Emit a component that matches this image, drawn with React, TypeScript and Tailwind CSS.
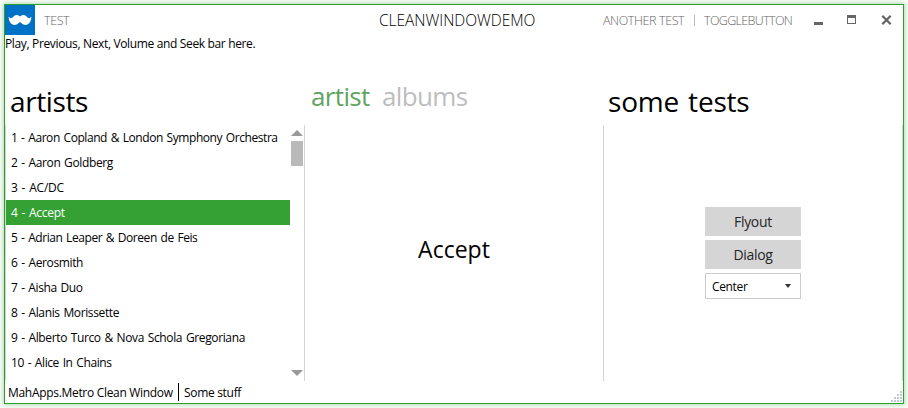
const artists = [
  { name: "1 - Aaron Copland & London Symphony Orchestra", tracking: "tracking-[-0.43px]" },
  { name: "2 - Aaron Goldberg", tracking: "tracking-[-0.37px]" },
  { name: "3 - AC/DC", tracking: "tracking-[-0.2px]" },
  { name: "4 - Accept", tracking: "tracking-[-0.25px]" },
  { name: "5 - Adrian Leaper & Doreen de Feis", tracking: "tracking-[-0.44px]" },
  { name: "6 - Aerosmith", tracking: "tracking-[-0.37px]" },
  { name: "7 - Aisha Duo", tracking: "tracking-[-0.4px]" },
  { name: "8 - Alanis Morissette", tracking: "tracking-[-0.37px]" },
  { name: "9 - Alberto Turco & Nova Schola Gregoriana", tracking: "tracking-[-0.37px]" },
  { name: "10 - Alice In Chains", tracking: "tracking-[-0.4px]" },
];

function TitleBar() {
  return (
    <header className="flex h-[30px] shrink-0 items-center">
      <div className="flex h-[30px] w-[30px] items-center justify-center bg-[#0072c6]">
        <svg width="24" height="12" viewBox="0 0 24 12" fill="#fff">
          <path d="M0.6 2.8L2.6 4.3C4 4.2 5 3.2 6 2C7.4 0.6 9.8 0.6 11 1.8L12 2.6L13 1.8C14.2 0.6 16.6 0.6 18 2C19 3.2 20 4.2 21.4 4.3L23.4 2.8C23.2 6.6 21.8 9.6 19.4 10.6C17.2 11.4 15 10.6 13.6 9.2L12 8L10.4 9.2C9 10.6 6.8 11.4 4.6 10.6C2.2 9.6 0.8 6.6 0.6 2.8Z" />
        </svg>
      </div>
      <span className="ml-[9px] w-[335px] pt-0.5 text-[12.5px] font-light tracking-[-0.4px] text-[#666]">TEST</span>
      <span className="w-[224px] pt-0.5 text-[15.5px] font-light tracking-[-0.03px] text-black">CLEANWINDOWDEMO</span>
      <span className="w-[91px] pt-0.5 text-[12.5px] font-light tracking-[-0.4px] text-[#666]">ANOTHER TEST</span>
      <span className="mt-px h-[11px] w-px bg-[#b8b8b8]" />
      <span className="ml-[9px] w-[110px] pt-0.5 text-[12.5px] font-light tracking-[-0.65px] text-[#666]">TOGGLEBUTTON</span>
      <svg width="78" height="12" viewBox="0 0 78 12" shapeRendering="crispEdges">
        <path d="M0 8h9v3H0z" fill="#666" />
        <path d="M33 1h9v9h-9zM34 4v5h7V4z" fill="#666" fillRule="evenodd" />
        <path d="M68.3 1.8L76.7 10.2M76.7 1.8L68.3 10.2" stroke="#666" strokeWidth="2.3" shapeRendering="auto" />
      </svg>
    </header>
  );
}

function ArtistList() {
  return (
    <div className="flex h-[256px] border-x border-[#d4d4d4]">
      <ul className="w-[284px] text-[12px] [word-spacing:1px]">
        {artists.map((artist, i) => (
          <li
            key={artist.name}
            className={`flex h-[25px] items-center whitespace-nowrap pt-px pl-[5px] ${artist.tracking} ${
              i === 3 ? "bg-[#35a135] text-white" : "text-black"
            }`}
          >
            {artist.name}
          </li>
        ))}
      </ul>
      <div className="flex w-[14px] flex-col items-center pt-[5px] pb-[5px]">
        <svg width="12" height="6" viewBox="0 0 12 6" fill="#999"><path d="M6 0L12 6H0z" /></svg>
        <div className="mt-[5px] h-[25px] w-[12px] bg-[#b9b9b9]" />
        <svg className="mt-auto" width="12" height="6" viewBox="0 0 12 6" fill="#999"><path d="M0 0H12L6 6z" /></svg>
      </div>
    </div>
  );
}

function TestPanel() {
  return (
    <div className="flex h-[256px] flex-col items-center border-r border-[#d4d4d4] pt-[82px]">
      <button className="h-[29px] w-24 bg-[#d5d5d5] text-[14px] tracking-[-0.3px] text-[#262626]">Flyout</button>
      <button className="mt-1 h-[29px] w-24 bg-[#d5d5d5] text-[14px] tracking-[-0.3px] text-[#262626]">Dialog</button>
      <div className="mt-1 flex h-[26px] w-24 items-center justify-between border border-[#ccc] pt-px pr-[9px] pl-[6px] text-[12px] tracking-[-0.35px]">
        Center
        <svg className="-mt-px" width="6" height="4" viewBox="0 0 6 4" fill="#333"><path d="M0 0h6L3 4z" /></svg>
      </div>
    </div>
  );
}

function StatusBar() {
  return (
    <footer className="flex flex-1 items-center text-[12px] tracking-[-0.31px]">
      <span className="ml-[3px] w-[170px] whitespace-nowrap pt-[2px]">MahApps.Metro Clean Window</span>
      <span className="h-[18px] w-px bg-black" />
      <span className="ml-[5px] pt-[2px]">Some stuff</span>
      <svg className="mt-auto mr-[1px] mb-[1px] ml-auto" width="11" height="11" viewBox="0 0 11 11" fill="#c3c9d6" shapeRendering="crispEdges">
        <path d="M9 0h2v2h-2zM6 3h2v2h-2zM9 3h2v2h-2zM3 6h2v2h-2zM6 6h2v2h-2zM9 6h2v2h-2zM0 9h2v2h-2zM3 9h2v2h-2zM6 9h2v2h-2zM9 9h2v2h-2z" />
      </svg>
    </footer>
  );
}

export default function App() {
  return (
    <div className="h-[408px] w-[908px] overflow-hidden bg-white p-1 font-['Open_Sans','Noto_Sans',sans-serif] text-black">
      <div className="flex h-[400px] w-[900px] flex-col border border-[#2f9e2f] bg-white shadow-[0_0_5px_1px_rgba(47,158,47,0.4)]">
        <TitleBar />
        <div className="h-[50px] text-[12px] leading-[18px] tracking-[-0.35px]">Play, Previous, Next, Volume and Seek bar here.</div>
        <main className="flex h-[296px]">
          <section className="w-[300px]">
            <h2 className="h-10 pl-[5px] text-[28px] leading-[32px] tracking-[-0.4px]">artists</h2>
            <ArtistList />
          </section>
          <section className="w-[299px]">
            <div className="flex h-10 pl-[6px] text-[26px] leading-[22px] tracking-[-0.65px]">
              <span className="w-[71px] text-[#5fa55f]">artist</span>
              <span className="text-[#bdbdbd]">albums</span>
            </div>
            <div className="flex h-[256px] items-center justify-center border-r border-[#d4d4d4] pb-2 text-[23px]">Accept</div>
          </section>
          <section className="w-[299px]">
            <h2 className="h-10 pl-1 text-[28px] leading-[32px] tracking-[-0.2px] [word-spacing:2px]">some tests</h2>
            <TestPanel />
          </section>
        </main>
        <StatusBar />
      </div>
    </div>
  );
}
